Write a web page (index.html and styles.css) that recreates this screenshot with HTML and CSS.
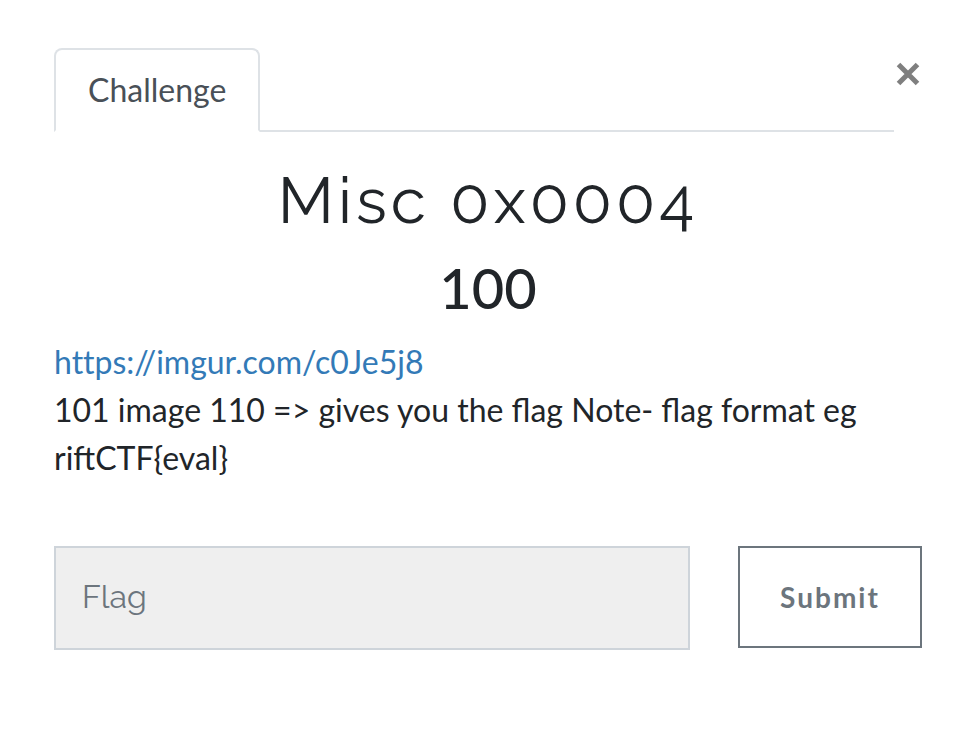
FILE: index.html
```html
<!DOCTYPE html>
<html lang="en">
<head>
<meta charset="utf-8">
<meta name="viewport" content="width=device-width, initial-scale=1">
<title>Misc 0x0004</title>
<link rel="stylesheet" href="styles.css">
</head>
<body>
<main class="modal">
  <header class="modal-header">
    <nav class="tabs"><a class="tab" href="#challenge">Challenge</a></nav>
    <button class="close" type="button" aria-label="Close">
      <svg viewBox="0 0 24 24" aria-hidden="true"><path d="M2.5 2.5 21.5 21.5M21.5 2.5 2.5 21.5"/></svg>
    </button>
  </header>
  <section id="challenge">
    <h1 class="name">Misc 0x0004</h1>
    <h2 class="value">100</h2>
    <p class="description"><a href="https://imgur.com/c0Je5j8">https://imgur.com/c0Je5j8</a><br>101 image 110 =&gt; gives you the flag Note- flag format eg riftCTF{eval}</p>
    <form class="answer">
      <input class="flag" type="text" placeholder="Flag" aria-label="Flag">
      <button class="submit" type="button">Submit</button>
    </form>
  </section>
</main>
</body>
</html>
```
FILE: styles.css
```css
* {
  box-sizing: border-box;
}

body {
  margin: 0;
  background: #fff;
  color: #212529;
  font-family: Lato, sans-serif;
  font-size: 32px;
  line-height: 48px;
}

.modal {
  padding: 48px 56px 86px 54px;
}

.modal-header {
  display: flex;
  align-items: flex-start;
}

.tabs {
  display: flex;
  flex: 1;
  border-bottom: 2px solid #dee2e6;
}

.tab {
  margin-bottom: -2px;
  padding: 16px 32px;
  border: 2px solid #dee2e6;
  border-bottom-color: #fff;
  border-radius: 8px 8px 0 0;
  background: #fff;
  color: #495057;
  text-decoration: none;
}

.close {
  width: 28px;
  padding: 14px 0 0 2px;
  border: 0;
  background: none;
}

.close svg {
  display: block;
  width: 24px;
  height: 24px;
  fill: none;
  stroke: #7f7f7f;
  stroke-width: 5;
}

.name,
.value {
  margin: 0;
  text-align: center;
}

.name {
  padding-top: 30px;
  font-family: Raleway, Inter, sans-serif;
  font-size: 64px;
  font-weight: 400;
  line-height: 78px;
  letter-spacing: 4px;
}

.value {
  padding-top: 14px;
  font-size: 56px;
  font-weight: 500;
  line-height: 68px;
}

.description {
  margin: 16px 0 64px;
}

.description a {
  color: #337ab7;
  font-variant-ligatures: none;
  text-decoration: none;
}

.answer {
  display: flex;
  align-items: flex-start;
  gap: 48px;
}

.flag {
  flex: 1;
  min-width: 0;
  height: 104px;
  padding: 0 26px 4px;
  border: 2px solid #ced4da;
  border-radius: 0;
  background: #efefef;
  color: #495057;
  font: 32px/48px "Avenir Next", Raleway, sans-serif;
}

.flag::placeholder {
  color: #6c757d;
  opacity: 1;
}

.submit {
  width: 184px;
  height: 102px;
  border: 2px solid #6c757d;
  background: #fff;
  color: #6c757d;
  font: 700 28px/42px Lato, sans-serif;
  letter-spacing: 2px;
}
```
